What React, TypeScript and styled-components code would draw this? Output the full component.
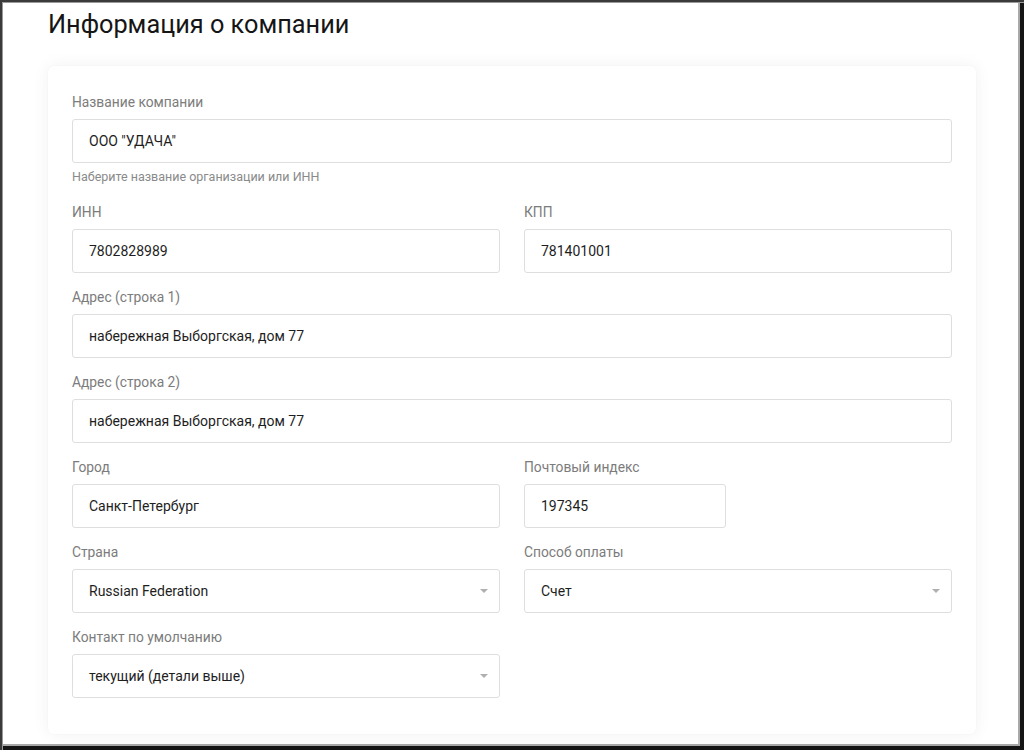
import React from "react";
import styled, { createGlobalStyle } from "styled-components";

const Global = createGlobalStyle`
  html, body { margin: 0; padding: 0; background: #fff; }
  body { font-family: Roboto, "Noto Sans", Arial, sans-serif; }
  * { box-sizing: border-box; }
`;

const Frame = styled.div`
  width: 1024px;
  height: 750px;
  overflow: hidden;
  position: relative;
  background: #fff;
  padding: 11px 48px 0 48px;
  box-shadow: inset 2px 2px 0 #3a3a3a, inset 3px 3px 0 #9a9a9a,
    inset -4px -4px 0 #151515, inset -6px -6px 0 #a8a8a8;
`;

const Title = styled.h1`
  margin: 0;
  font-size: 25.3px;
  line-height: 28px;
  font-weight: 400;
  color: #151515;
`;

const Card = styled.div`
  margin-top: 27px;
  background: #fff;
  border-radius: 6px;
  box-shadow: 0 0 18px rgba(0, 0, 0, 0.06), 0 0 2px rgba(0, 0, 0, 0.04);
  padding: 28px 24px 20px 24px;
`;

const Row = styled.div<{ $cols?: number }>`
  display: grid;
  grid-template-columns: ${(p) => (p.$cols === 2 ? "1fr 1fr" : "1fr")};
  column-gap: 24px;
`;

const Group = styled.div<{ $extra?: number }>`
  display: flex;
  flex-direction: column;
  margin-bottom: ${(p) => 16 + (p.$extra || 0)}px;
`;

const Label = styled.label`
  font-size: 13.8px;
  line-height: 17px;
  color: #7c7c7c;
  margin-bottom: 8px;
`;

const Field = styled.div<{ $width?: number }>`
  position: relative;
  height: 44px;
  width: ${(p) => (p.$width ? `${p.$width}px` : "100%")};
  border: 1px solid #dedede;
  border-radius: 3px;
  background: #fff;
  display: flex;
  align-items: center;
  padding: 0 16px;
  font-size: 14px;
  color: #1e1e1e;
`;

const Caret = styled.span`
  position: absolute;
  right: 11px;
  top: 50%;
  margin-top: -2px;
  width: 0;
  height: 0;
  border-left: 4px solid transparent;
  border-right: 4px solid transparent;
  border-top: 4px solid #b0b0b0;
`;

const Help = styled.div`
  margin-top: 6px;
  font-size: 12.5px;
  line-height: 16px;
  color: #8a8a8a;
`;

type FP = { label: string; value: string; select?: boolean; width?: number; help?: string };

const FormField: React.FC<FP> = ({ label, value, select, width, help }) => (
  <Group $extra={help ? 3 : 0}>
    <Label>{label}</Label>
    <Field $width={width}>
      {value}
      {select && <Caret />}
    </Field>
    {help && <Help>{help}</Help>}
  </Group>
);

export default function App() {
  return (
    <>
      <Global />
      <Frame>
        <Title>Информация о компании</Title>
        <Card>
          <FormField
            label="Название компании"
            value={'ООО "УДАЧА"'}
            help="Наберите название организации или ИНН"
          />
          <Row $cols={2}>
            <FormField label="ИНН" value="7802828989" />
            <FormField label="КПП" value="781401001" />
          </Row>
          <FormField label="Адрес (строка 1)" value="набережная Выборгская, дом 77" />
          <FormField label="Адрес (строка 2)" value="набережная Выборгская, дом 77" />
          <Row $cols={2}>
            <FormField label="Город" value="Санкт-Петербург" />
            <FormField label="Почтовый индекс" value="197345" width={202} />
          </Row>
          <Row $cols={2}>
            <FormField label="Страна" value="Russian Federation" select />
            <FormField label="Способ оплаты" value="Счет" select />
          </Row>
          <Row $cols={2}>
            <FormField label="Контакт по умолчанию" value="текущий (детали выше)" select />
          </Row>
        </Card>
      </Frame>
    </>
  );
}
